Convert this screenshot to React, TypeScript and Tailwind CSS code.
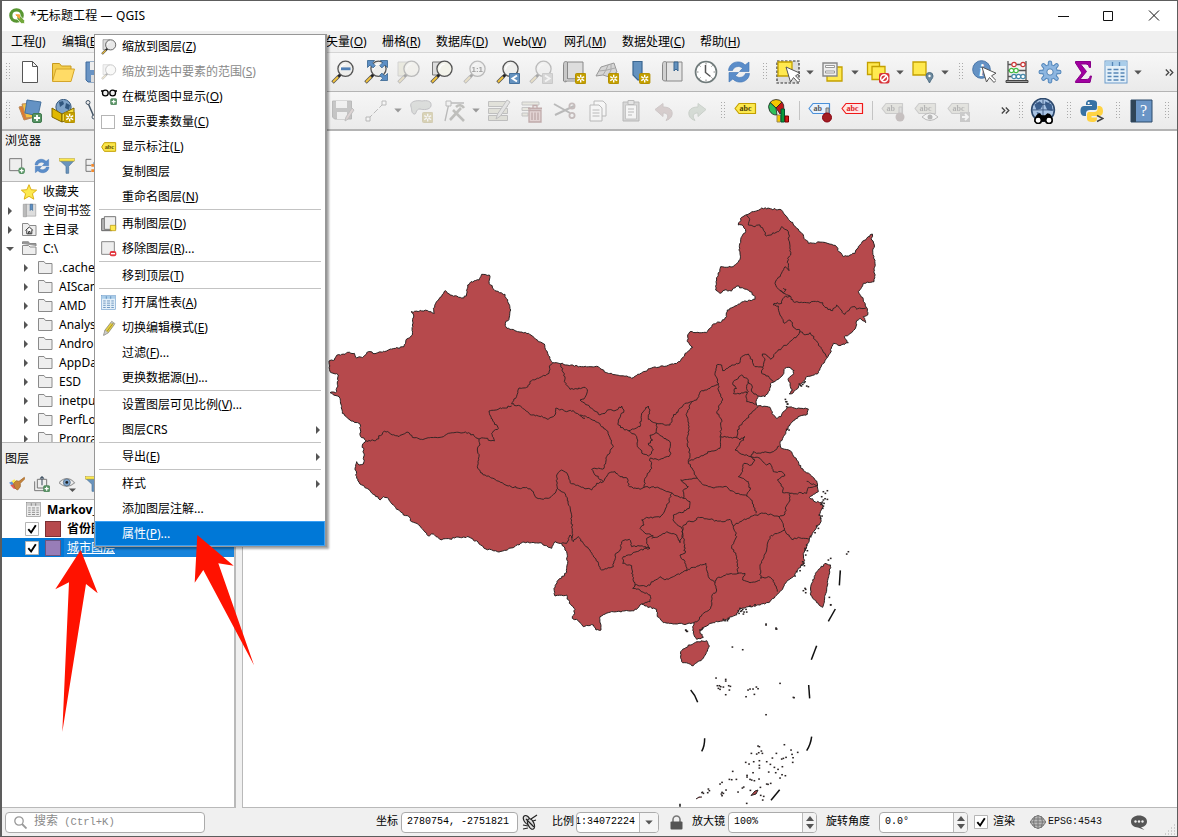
import React from "react";

type Pt = [number, number];

/* ---------- map geometry ---------- */

// Survey tiles: coordinates are stored in thirds of a pixel from the tile's corner.
const WEST: Pt = [325, 260];
const NORTH: Pt = [600, 200];
const EAST: Pt = [540, 400];
const SEA: Pt = [660, 600];

function tile(origin: Pt, data: string): Pt[] {
  return data.trim().split(/\s+/).map((pair) => {
    const [x, y] = pair.split(",").map(Number);
    return [origin[0] + x / 3, origin[1] + y / 3] as Pt;
  });
}

function noise(x: number, y: number) {
  const s = Math.sin(x * 12.9898 + y * 78.233) * 43758.5453;
  return s - Math.floor(s) - 0.5;
}

// Breaks straight runs into short uneven steps, as a detailed border has.
function rough(points: Pt[], amount = 1.5): string {
  const out: Pt[] = [points[0]];
  for (let i = 1; i < points.length; i++) {
    const [ax, ay] = points[i - 1];
    const [bx, by] = points[i];
    const n = Math.max(1, Math.round(Math.hypot(bx - ax, by - ay) / 1.8));
    for (let k = 1; k < n; k++) {
      const x = ax + ((bx - ax) * k) / n;
      const y = ay + ((by - ay) * k) / n;
      out.push([x + noise(x, y) * amount, y + noise(y, x) * amount]);
    }
    out.push([bx, by]);
  }
  return "M" + out.map(([x, y]) => x.toFixed(2) + " " + y.toFixed(2)).join("L");
}

const mainland: Pt[] = [
  ...tile(WEST, `12,303 28,300 35,286 60,283 68,277 88,280 92,292 112,293 130,275 150,281 190,270 237,260 245,237 262,225
    262,195 266,165 258,155 308,152 328,160 325,145 345,112 361,92 375,105 395,108 410,114 424,108 428,75 438,65 462,60
    470,43 493,45 492,65 510,92 540,103 548,125 557,150 552,178 541,190 546,205 570,212 610,220 640,245 658,252 668,280
    683,308 706,311 770,320 820,320`),
  ...tile(NORTH, `0,505 20,518 50,525 80,528 95,535 130,515 160,502 200,498 240,485 260,458 278,442 262,425 263,405 270,395
    320,398 340,372 365,365 380,350 382,330 405,318 430,305 465,298 465,290 450,275 430,265 410,258 400,265 395,273
    375,270 360,280 347,270 350,240 362,200 400,200 420,178 418,140 425,110 437,95 430,78 415,75 425,52 440,44 460,35
    485,24 515,27 540,28 555,45 590,85 605,100 625,130 650,128 672,127 710,140 717,155 730,170 765,160 775,140 800,115
    817,102 815,120 823,135 818,150 825,190 822,245 790,250 785,262 775,275 790,298 800,323 803,345 790,350 797,368
    780,355 770,362 768,380 755,398 733,410 745,428 720,437 700,430 690,460 680,475 665,495 652,522 620,530 605,550
    580,578 568,582 578,570 570,555 565,535 578,525 582,512 570,503 555,505 548,525 530,540 515,548 505,575 495,590
    475,588 468,605 472,618 510,622 520,645 530,655 543,650 550,635 562,622 600,625 625,627 622,643 600,648 575,668
    560,690 548,715`),
  ...tile(EAST, `720,130 722,143 750,152 770,180 790,212 815,228 830,243 832,260 835,275 820,283 808,292 825,305 845,308
    850,320 840,340 843,365 825,390 808,418 800,440 790,460 793,490 775,505 760,530 740,545 720,575 705,590 690,605
    660,615 630,620 600,628 590,645 560,658 520,668 495,680 480,695 490,712 470,718 460,700 458,680 462,668 440,672
    400,672 370,668 352,650 350,628 315,618 305,612 290,628 270,633 230,635 205,638 180,650 182,672 183,690 168,690
    160,675 130,680 115,662 97,655 105,628 88,610 80,585 45,588 42,565 55,540 80,518 83,490 80,455 65,430 45,425
    35,445 0,428`),
  [524, 542], [511, 548], [499, 552], [486, 549], [478, 542], [469, 537], [458, 537], [450, 539],
  ...tile(WEST, `345,838 325,822 310,828 285,798 260,785 250,768 235,765 205,735 190,715 175,710 165,720 150,705 125,685
    105,672 95,655 90,625 95,605 102,615 115,612 118,585 112,555 122,542 107,530 105,492 75,480 52,460 50,440 42,410
    15,398 35,395 40,345 15,335 12,303`),
];

const taiwan = tile(EAST, "855,490 872,495 866,530 860,570 848,622 830,608 812,585 815,550 830,515 855,490");
const hainan = tile(EAST, "475,725 500,722 508,738 490,775 460,797 425,785 422,755 445,735 475,725");

const borders: Pt[][] = [
  tile(WEST, "122,542 152,542 178,513 222,530 246,516 262,532 290,538 330,532 355,530 370,520 430,518 462,537 475,534 508,543 500,520 520,505 498,475 492,453 560,438"),
  tile(WEST, "683,310 673,318 672,340 650,350 620,362 605,382 582,384 572,415 560,432 580,436 598,448 620,465 650,468 670,478 690,465 692,445 725,455 745,452 780,475"),
  tile(EAST, "120,45 130,48 165,62 200,92 220,140 200,170 192,205 165,205 155,208 165,225 185,240 190,245"),
  tile(WEST, "706,311 720,350 718,365 735,388 780,382 787,395 780,412 765,420 800,445 825,465 840,460"),
  tile(EAST, "195,40 202,30 225,32 245,18 252,30 235,60 235,75 255,90 265,92"),
  tile(WEST, "462,537 465,555 457,570 462,590 457,620 475,645 510,658 550,678 590,685 605,682 625,695 632,712 655,718 670,715 690,700 698,685"),
  tile(EAST, "52,265 50,225 65,210 80,218 90,248 125,262 155,270 170,250 190,245 205,220 225,215 240,230 262,235 268,260 300,268 312,262"),
  tile(EAST, "52,265 75,280 90,320 95,360 98,415"),
  tile(EAST, "65,430 80,430 90,405 100,425 115,410 130,430 150,450 185,510 220,500 225,465 240,450 245,425 268,418 275,440 300,438 330,445"),
  tile(EAST, "312,262 350,262 380,275 430,295"),
  tile(EAST, "395,280 385,310 375,330 360,352 320,352 305,360 312,375 300,385 315,400 340,408 320,415 320,430 330,445 300,450 270,465 250,470 248,490 275,497 278,530 285,555"),
  tile(EAST, "430,295 450,305 448,325 425,338 400,345 402,365 425,385 428,400 420,428 410,405 380,395 350,412 335,415"),
  tile(EAST, "285,555 320,560 340,545 360,530 375,540 400,530 440,512 435,485 420,465 435,460 432,430 428,400 428,380"),
  tile(EAST, "285,555 278,565 300,570 330,585 330,605 305,612"),
  tile(EAST, "440,512 460,502 498,490 505,530 525,548 530,570 515,590 512,625 490,640 475,662 462,668"),
  tile(EAST, "525,548 530,535 560,522 595,520 590,470 575,440 590,410 580,378"),
  tile(EAST, "428,380 440,368 465,362 475,352 510,358 545,365 570,358 580,378 600,365 648,345 670,340 718,350"),
  tile(EAST, "430,295 430,270 445,260 422,240 472,235"),
  tile(EAST, "472,235 490,255 515,262 560,260 570,272 620,288"),
  tile(EAST, "455,5 440,40 447,80 442,130 450,160 445,185 472,235"),
  tile(EAST, "445,185 480,170 510,155 540,145 542,110"),
  tile(NORTH, "360,712 365,660 350,635 368,600 355,570 355,550 345,520 350,495 365,495 368,512 395,495 420,488 425,470 445,462 465,500 488,502"),
  tile(NORTH, "355,550 330,565 305,572 290,600 275,605"),
  tile(NORTH, "520,545 505,528 485,520 488,502 495,480 487,462 500,465 512,478 525,460 570,425 595,405 600,390"),
  tile(NORTH, "600,390 585,385 570,360 555,370 540,345 535,318 520,315 522,310 545,310 552,292 570,288"),
  tile(NORTH, "600,395 615,405 630,398 655,430 675,460 680,472"),
  tile(NORTH, "570,288 580,305 620,308 650,305 668,308 675,322 698,332 710,315 735,343 750,325 765,320 770,328 800,323"),
  tile(NORTH, "570,288 552,280 530,262 525,250 555,200 567,212 563,175 572,165 565,95 545,80 535,95 500,108 480,75 465,80 445,75 448,55 440,44"),
  tile(NORTH, "540,272 550,278 558,268 550,264"),
  tile(NORTH, "400,545 425,525 445,540 440,560 445,575 420,582 400,580 402,570 410,565 398,550 400,545"),
  tile(NORTH, "445,545 455,555 455,575 468,582 475,588"),
  tile(NORTH, "440,575 440,605 468,612"),
  tile(NORTH, "475,620 440,655 412,690 410,712"),
  tile(EAST, "542,110 595,115 600,120 615,110 585,150 600,160 632,170 640,155 660,160 700,155 718,138"),
  tile(EAST, "632,170 645,180 635,195 612,190 608,215 595,230 625,245 630,270 620,288 635,300 648,340"),
  tile(EAST, "632,170 660,175 680,195 690,190 700,215 725,215 735,225 712,240 730,265 728,278 750,280 800,280 805,262 830,258"),
  tile(EAST, "800,244 832,258"),
  tile(EAST, "750,280 750,300 738,320 735,340 718,350 730,375 733,390 755,418 775,412 808,418"),
  tile(EAST, "733,390 690,410 680,450 660,500 662,535 685,530 700,540 712,575"),
  tile(EAST, "595,520 615,520 608,540 630,548 660,540"),
  tile(EAST, "265,92 300,80 305,40 325,18 330,30 325,58 350,70 390,75 400,50 430,15 455,5"),
  tile(EAST, "265,92 290,110 292,140 310,162 325,168 340,150 325,130 338,120 330,105 348,98 350,70"),
  tile(EAST, "348,98 390,125 390,165 355,180 330,175 335,205 315,235 312,262"),
];

const islets: Pt[] = [
  ...tile(SEA, `168,234 197,238 197,243 172,257 178,257 182,260 190,261 175,265 180,268 206,257 211,259 208,270 197,284
    264,270 270,267 279,267 289,261 294,266 283,283 258,290 360,250 400,292 402,293 318,344 373,434 294,438 298,440
    274,460 290,462 296,458 304,453 307,460 349,460 393,450 396,463 413,457 399,473 398,487 337,474 365,477 370,475
    378,472 320,485 331,493 343,502 354,508 367,500 326,516 347,518 376,527 366,524 360,534 257,487 267,492 281,485
    298,482 298,496 298,504 279,518 261,526 261,531 270,538 275,540 283,542 297,537 218,514 208,538 215,539 229,538
    186,547 180,552 198,570 186,577 184,582 190,580 186,587 145,567 148,572 143,578 127,577 130,580 247,564 251,561
    234,576 271,571 301,562 302,586 311,589 308,600 260,610 332,550 320,552 324,553 318,72 318,75 348,84 350,87 348,87
    217,141 248,149 78,91 82,94 512,14`),
  ...tile(EAST, `865,480 872,475 868,592 872,615 795,565 797,568 797,578 790,572 920,462 925,455 850,275 856,280 845,290
    862,272 850,300 855,296 862,298 845,312 850,318 852,310 847,306 843,313 848,325 838,345 846,348 842,355 835,385
    825,398 830,378 812,410 800,435 795,450 797,465 795,445 802,452 790,490 785,495 793,497 788,485 780,512 770,515
    765,528 738,5 742,12 740,20 600,625 605,632 612,636 618,628 597,640 610,642 602,634 608,628 595,632 620,636
    565,655 555,662 562,662 550,658 485,688 480,690 488,684 437,690 440,694 630,618 645,614`),
  ...tile(NORTH, "598,552 602,556 608,553 612,548 615,545 620,558 625,560 604,558 560,605 563,612 556,598 560,688 567,690"),
];

const dashes = [
  "M901 511L898 556", "M886 627L865 664", "M830 737L814 779",
].map((d) => ({ d, o: EAST })).concat([
  { d: "M446 255L449 295", o: SEA },
  { d: "M455 410C453 425 446 443 440 452", o: SEA },
  { d: "M359 569L333 601", o: SEA },
  { d: "M92 270Q106 285 113 307", o: SEA },
  { d: "M134 415Q134 440 125 454", o: SEA },
  { d: "M60 611L60 620", o: SEA },
]);

function MapCanvas() {
  return (
    <svg className="block h-full w-full" viewBox="243 131 934 676" preserveAspectRatio="xMinYMin slice">
      <g fill="#b6494c" stroke="#2a2323" strokeWidth="1" strokeLinejoin="round">
        <path d={rough(mainland)} />
        <path d={rough(taiwan)} />
        <path d={rough(hainan)} />
        <path d="M751 795.5L755 791L758 790L756 794Z M696 799l3-2 3 0 M701 793l2-1" />
        <g fill="none" strokeWidth="0.9">
          {borders.map((b, i) => <path key={i} d={rough(b, 1.7)} />)}
        </g>
      </g>
      {islets.map(([x, y], i) => (
        <rect key={i} x={x - 0.8} y={y - 0.7} width={1.7} height={1.5} fill="#2a2323" />
      ))}
      {dashes.map(({ d, o }, i) => (
        <path key={i} d={d} transform={`translate(${o[0]} ${o[1]}) scale(.33333)`} fill="none" stroke="#111" strokeWidth="4.500" />
      ))}
    </svg>
  );
}

/* ---------- icons ---------- */

function Svg({ children, size = 24, dim = false }: { children: React.ReactNode; size?: number; dim?: boolean }) {
  return (
    <svg width={size} height={size} viewBox="0 0 24 24" className={dim ? "shrink-0 opacity-35 saturate-50" : "shrink-0"}>
      {children}
    </svg>
  );
}

const Lens = ({ fill = "#eeeeec" }: { fill?: string }) => (
  <>
    <path d="M9.500 14.500L7 17" stroke="#222" strokeWidth="3" />
    <path d="M7.500 16.500L1.500 22.500" stroke="#555" strokeWidth="3.400" />
    <path d="M7 17L2 22" stroke="#f3c43c" strokeWidth="1.800" />
    <circle cx="14.500" cy="8.800" r="7.600" fill={fill} stroke="#555" strokeWidth="1.300" />
    <path d="M9.600 9.400a5 5 0 0 1 5-5.200" fill="none" stroke="#fff" strokeWidth="1.200" />
  </>
);

const Spark = ({ x = 13, y = 13 }: { x?: number; y?: number }) => (
  <g transform={`translate(${x} ${y})`}>
    <rect x=".5" y=".5" width="10.4" height="10" rx="1" fill="#c4a000" stroke="#b38f00" />
    <path d="M5.700 1.800v7.600M2.200 3.600l7 4M9.200 3.600l-7 4" stroke="#fff" strokeWidth="1.400" />
    <circle cx="5.700" cy="5.600" r="1.100" fill="#c4a000" />
  </g>
);

const Plus = ({ x = 14, y = 14 }: { x?: number; y?: number }) => (
  <g transform={`translate(${x} ${y})`}>
    <rect x=".5" y=".5" width="9" height="9" rx="1.500" fill="#589465" stroke="#3f7a4d" />
    <path d="M5 2v6M2 5h6" stroke="#fff" strokeWidth="1.800" />
  </g>
);

const Cursor = () => <path d="M10 7l4.500 15 3-4.500 4.500 5 2-2-4.500-4.700 4.500-2.600z" fill="#fff" stroke="#555" strokeWidth="1" />;

const Refresh = () => (
  <g fill="#5b8dc9" stroke="#3d72b4" strokeWidth=".6">
    <path d="M1.500 10.500C2 4 8 .800 13.500 2.200c2 .5 3.500 1.500 4.600 2.800l3.900-3v9.500h-9.500l3-3.200C12.500 5.200 7 6.300 5.500 10.500z" />
    <path d="M22.500 13.500C22 20 16 23.200 10.500 21.800c-2-.5-3.500-1.500-4.600-2.800L2 22v-9.500h9.500l-3 3.200c3 3.100 8.500 2 10-2.200z" />
  </g>
);

const Tag = ({ bg, line, ink, text = "abc" }: { bg: string; line: string; ink: string; text?: string }) => (
  <>
    <path d="M1 9.500L5 4.500H21.500V14.500H5Z" fill={bg} stroke={line} strokeWidth="1.200" strokeLinejoin="round" />
    <text x="5.500" y="11.800" fontSize="8" fontWeight="bold" fill={ink} fontFamily="Liberation Serif, serif">{text}</text>
  </>
);

const Folder = ({ home = false, open = false }: { home?: boolean; open?: boolean }) => (
  <svg width="15" height="15" viewBox="0 0 15 15" className="shrink-0">
    {open && <path d="M.5 3V.8h6l1 1.700h6.500V5" fill="#999" stroke="#888" />}
    <path d={open ? "M.5 13.500v-9h6l1.500 1.500h6v7.500z" : "M.5 13.500V1.500h5.500l1.500 2h6.500v10z"} fill="#eee" stroke="#8a8a8a" />
    {home && <path d="M3.500 8.500l3.800-3.500 3.800 3.500M4.800 8.200v3.600h5V8.200M6.600 11.800V9.600h1.500v2.200" fill="#fff" stroke="#333" />}
  </svg>
);

const Table = ({ gray = false }: { gray?: boolean }) => (
  <>
    <rect x="1" y="1" width="22" height="22" fill={gray ? "#eee" : "#e4f0f9"} stroke={gray ? "#888" : "#6c9bca"} />
    <rect x="1.500" y="1.500" width="21" height="4.500" fill={gray ? "#ccc" : "#a9cdea"} />
    <path d="M3.500 9.500h4M9.500 9.500h5M16.500 9.500h4M3.500 13h4M9.500 13h5M16.500 13h4M3.500 16.500h4M9.500 16.500h5M16.500 16.500h4M3.500 20h4M9.500 20h5M16.500 20h4M8.500 2v4M15.500 2v4" stroke={gray ? "#777" : "#5585b5"} strokeWidth="1.300" />
  </>
);

const Funnel = () => (
  <>
    <path d="M1.500 4h21l-8 8.500V23h-4V12.500z" fill="#6a94bd" stroke="#466f98" />
    <rect x="1" y="1" width="22" height="3.600" fill="#fce94f" stroke="#b8a22a" strokeWidth=".8" />
  </>
);

const Bin = () => (
  <>
    <path d="M2 3h17v3H2zM2 8.500h8v3H2zM2 14h6v3H2z" fill="#d8d4a8" stroke="#777" />
    <path d="M8 9.500h14" stroke="#922" strokeWidth="2" />
    <path d="M13 9V6.500h4V9" fill="none" stroke="#922" strokeWidth="1.300" />
    <path d="M9 11.500h12V23H9z" fill="#e99" stroke="#922" strokeWidth="1.300" />
    <path d="M12 13.500V21M15 13.500V21M18 13.500V21" stroke="#922" strokeWidth="1.400" />
  </>
);

const Pencil = () => (
  <>
    <path d="M4 23l2-8L16 2l5 3.500L11 19z" fill="#e5cf45" stroke="#777" strokeWidth="1" />
    <path d="M16 2l5 3.500-1.500 2.500-5.200-3.500z" fill="#bbb" />
    <path d="M9 17L18.500 4.500" stroke="#a8952a" strokeWidth="1.500" />
    <path d="M4 23l2-8 5 4z" fill="#ccc" stroke="#888" strokeWidth=".6" />
  </>
);

function Arrow({ faded = false }: { faded?: boolean }) {
  return (
    <span className="flex w-3 justify-center">
      <svg width="8" height="5" viewBox="0 0 8 5"><path d="M.3.500h7.400L4 4.600z" fill={faded ? "#999" : "#555"} /></svg>
    </span>
  );
}

const GripDots = () => (
  <svg width="4" height="18" viewBox="0 0 4 18" className="shrink-0">
    {[0, 3, 6, 9, 12, 15].map((y) => (
      <path key={y} d={`M0 ${y + 0.5}h1M3 ${y + 0.5}h1`} stroke="#aaa" />
    ))}
  </svg>
);

const Grip = () => <span className="flex w-4 justify-end pr-1"><GripDots /></span>;

const Slot = ({ children }: { children: React.ReactNode }) => (
  <span className="flex w-[33px] shrink-0 items-center justify-center">{children}</span>
);

const Divider = ({ className }: { className: string }) => (
  <span className={`flex justify-center ${className}`}><i className="h-[19px] w-px bg-[#c4c4c4]" /></span>
);

const More = () => (
  <svg width="9" height="7" viewBox="0 0 9 7"><path d="M.8.500l3 3-3 3M4.800.500l3 3-3 3" fill="none" stroke="#444" strokeWidth="1.300" /></svg>
);

function Toolbar1() {
  return (
    <div className="flex h-[39px] items-center border-b border-[#b4b4b4] bg-gradient-to-b from-[#f7f7f7] to-[#eaeaea]">
      <span className="flex w-[11px] pl-1"><GripDots /></span>
      <Slot><Svg><path d="M4.500 1.500h10l5 5v16h-15zM14.500 1.500v5h5" fill="#fff" stroke="#555" /></Svg></Slot>
      <Slot><Svg><path d="M1.500 21V3.500h7l2 2.500H20v4" fill="#f3cd4b" stroke="#c79a1e" /><path d="M1.500 21.500L5 9h18.500L20 21.500z" fill="#ffdb66" stroke="#d4a52a" /></Svg></Slot>
      <Slot><Svg><path d="M2 2h20v20H4l-2-2z" fill="#6a94c4" stroke="#3e6b9d" /><path d="M6 2h12v8H6z" fill="#eee" /><path d="M7 15h10v7H7z" fill="#ddd" /></Svg></Slot>
      <span className="w-[214px]" />
      <Slot><Svg><Lens /><path d="M10 8.800h9.500" stroke="#4f7fb5" strokeWidth="2.800" /></Svg></Slot>
      <Slot><Svg><Lens /><g fill="#5d8fc5" stroke="#37648f" strokeWidth=".8"><path d="M3.500.500h7L8.300 2.700l3 3-2.200 2.200-3-3-2.600 2.600z" /><path d="M23.500.500h-7l2.200 2.200-3 3 2.200 2.200 3-3 2.600 2.600z" /><path d="M23.500 20.500h-7l2.200-2.200-3-3 2.200-2.200 3 3 2.600-2.600z" /></g></Svg></Slot>
      <Slot><Svg dim><path d="M1 2h10v14H1z" fill="#ddd8a0" stroke="#999" /><Lens fill="#f3f0d8" /></Svg></Slot>
      <Slot><Svg><path d="M2.500 2h9v13h-9z" fill="#ddd" stroke="#777" /><Lens fill="#f3f3ea" /></Svg></Slot>
      <Slot><Svg dim><Lens /><text x="8.500" y="12" fontSize="8" fontWeight="bold" fontFamily="Liberation Sans, sans-serif">1:1</text></Svg></Slot>
      <Slot><Svg><Lens /><path d="M13.500 13.500h10v10h-10z" fill="#6492bf" stroke="#46729e" /><path d="M21 15.500l-4.500 3 4.500 3" fill="none" stroke="#fff" strokeWidth="2" /></Svg></Slot>
      <Slot><Svg dim><Lens /><path d="M13.500 13.500h10v10h-10z" fill="#aaa" stroke="#888" /><path d="M16 15.500l4.500 3-4.500 3" fill="none" stroke="#fff" strokeWidth="2" /></Svg></Slot>
      <Slot><Svg><path d="M5.500 2H21v17H5.500z" fill="#ddd" stroke="#888" /><path d="M5.500 2C2 .500 1.500 3 1.500 5v16c2 2 4 0 4-2z" fill="#c8c8c8" stroke="#888" /><path d="M3 21h15v-2H5.500" fill="#eee" stroke="#888" /><Spark /></Svg></Slot>
      <Slot><Svg><path d="M1 16l5-9 13-4 3 9-8 5-6-2z" fill="#d5d5d5" stroke="#999" /><path d="M4 11l8-1 8-2M8 15l3-5 2-5M13 16l3-6 0-6" fill="none" stroke="#aaa" /><Spark /></Svg></Slot>
      <Slot><Svg><path d="M5 1.500h9V19l-4 1-5-5z" fill="#6492bf" stroke="#3b6791" strokeWidth="1.200" /><Spark x={11} /></Svg></Slot>
      <Slot><Svg><path d="M5.500 2H21v19H5.500z" fill="#e4e4e4" stroke="#888" /><path d="M5.500 2C2 .500 1.500 3 1.500 5v14c0 2 2 2 4 2z" fill="#d0d0d0" stroke="#888" /><path d="M13 2h4v9l-2-2-2 2z" fill="#6492bf" stroke="#37648f" /></Svg></Slot>
      <Slot><Svg><circle cx="12" cy="12" r="10.500" fill="#fff" stroke="#6f7a7a" strokeWidth="1.600" /><path d="M12 2.500v2M12 19.500v2M2.500 12h2M19.500 12h2M5.300 5.300l1.300 1.300M17.400 17.400l1.300 1.300M18.700 5.300l-1.300 1.300M6.600 17.400l-1.300 1.300" stroke="#888" /><path d="M11.500 5v7.500l5 4" fill="none" stroke="#555" strokeWidth="1.500" /></Svg></Slot>
      <Slot><Svg><Refresh /></Svg></Slot>
      <Grip />
      <Slot><Svg><path d="M1 1h22v22H1z" fill="#ddd" stroke="#333" strokeDasharray="2.500 1.500" strokeWidth="1.200" /><path d="M2 2h14v14H2z" fill="#ffe94f" stroke="#c4a000" strokeWidth="1.300" /><Cursor /></Svg></Slot>
      <Arrow />
      <Slot><Svg><path d="M6 7h15v14H6z" fill="#ffe94f" stroke="#c4a000" strokeWidth="1.300" /><path d="M2 3h14v13H2z" fill="#eee" stroke="#888" strokeWidth="1.400" /><path d="M4.500 5.500h9v2h-9zM4.500 11h9v2h-9z" fill="#fff" stroke="#999" /></Svg></Slot>
      <Arrow />
      <Slot><Svg><path d="M1.500 2.500h12v12h-12z" fill="#ffe94f" stroke="#c4a000" strokeWidth="1.300" /><path d="M6 6.500h13v13H6z" fill="#ffe94f" stroke="#c4a000" strokeWidth="1.300" /><rect x="13" y="13" width="10.500" height="10.500" rx="2" fill="#d8343a" /><circle cx="18.200" cy="18.200" r="3.500" fill="none" stroke="#fff" strokeWidth="1.500" /><path d="M15.800 20.600l5-5" stroke="#fff" strokeWidth="1.500" /></Svg></Slot>
      <Arrow />
      <Slot><Svg><path d="M2 2h13v13H2z" fill="#ffe94f" stroke="#c4a000" strokeWidth="1.300" /><path d="M18.500 23c-1-3-3.500-4.500-3.500-7a3.500 3.500 0 0 1 7 0c0 2.500-2.500 4-3.500 7z" fill="#6d8a9f" stroke="#4e6d83" /><circle cx="18.500" cy="16" r="1.200" fill="#fff" /></Svg></Slot>
      <Arrow />
      <Grip />
      <Slot><Svg><circle cx="9.500" cy="9.500" r="8.800" fill="#6492c4" stroke="#4875a8" /><text x="7" y="15.500" fontSize="17" fontStyle="italic" fontWeight="bold" fill="#fff" fontFamily="Liberation Serif, serif">i</text><Cursor /></Svg></Slot>
      <Slot><Svg><path d="M3 1v21M21 1v21M3 4.500h18M3 10.500h18M3 16.500h18" fill="none" stroke="#555" strokeWidth="1.300" /><path d="M1 20.500h22v2H1z" fill="#999" stroke="#444" /><g fill="#fff" strokeWidth="1.200"><g stroke="#c33"><circle cx="9" cy="4.500" r="2.200" /><circle cx="18" cy="4.500" r="2.200" /></g><g stroke="#4b4"><circle cx="6.500" cy="10.500" r="2.200" /><circle cx="11" cy="10.500" r="2.200" /></g><g stroke="#48a"><circle cx="9" cy="16.500" r="2.200" /><circle cx="13.500" cy="16.500" r="2.200" /><circle cx="18" cy="16.500" r="2.200" /></g></g></Svg></Slot>
      <Slot><Svg><g stroke="#4f83b8" strokeWidth="4.400" strokeLinecap="round">{[0, 45, 90, 135].map((a) => <path key={a} d="M12 2.700v18.600" transform={`rotate(${a} 12 12)`} />)}</g><circle cx="12" cy="12" r="7.300" fill="#8db6e0" stroke="#4f83b8" /><g stroke="#8db6e0" strokeWidth="2.600" strokeLinecap="round">{[0, 45, 90, 135].map((a) => <path key={a} d="M12 2.700v18.600" transform={`rotate(${a} 12 12)`} />)}</g><circle cx="12" cy="12" r="3.200" fill="#f3f3f3" stroke="#4f83b8" /></Svg></Slot>
      <Slot><Svg><path d="M4.500 1.500h15v6h-1.200c-.5-2.500-1.500-3.500-4-3.500H9.500l6 7.500-6.500 8h6c2.500 0 3.500-1 4.200-3.500h1.300L19 22.500H4.500v-1.200L11 13 4.500 3z" fill="#a000a0" stroke="#880088" /></Svg></Slot>
      <Slot><Svg><Table /></Svg></Slot>
      <Arrow />
      <span className="flex w-[30px] justify-end"><More /></span>
    </div>
  );
}

function Toolbar2() {
  return (
    <div className="flex h-[39px] items-center border-b-2 border-[#b4b4b4] bg-gradient-to-b from-[#f6f6f6] to-[#ebebeb]">
      <span className="flex w-[11px] pl-1"><GripDots /></span>
      <Slot><Svg><path d="M1 8l12-3 4 13-11 3z" fill="#e07a2e" stroke="#b85" /><path d="M4 5l12-1 1 14-9 1z" fill="#f6c243" stroke="#b85" /><path d="M9 1l14 2-3 14-13-3z" fill="#6492c4" stroke="#46729e" /><Plus /></Svg></Slot>
      <Slot><Svg><circle cx="12.500" cy="8" r="7.600" fill="#7fa3c8" stroke="#34597f" /><path d="M8 3l4-1 1 3-4 3zM15 4l4 2-1 5-4-2z" fill="#31577f" /><path d="M1 9l10 6v8L1 18z" fill="#e0b800" stroke="#7d6500" /><path d="M11 15l12-6v9l-12 5z" fill="#f5dc3a" stroke="#7d6500" /><Spark /></Svg></Slot>
      <Slot><Svg><path d="M4 4l6 14L22 5" fill="none" stroke="#456" strokeWidth="1.500" /><circle cx="4" cy="3.500" r="2" fill="#eee" stroke="#456" /><circle cx="10" cy="18" r="2" fill="#eee" stroke="#456" /></Svg></Slot>
      <span className="w-[214px]" />
      <Slot><Svg dim><path d="M1.500 2h19v18h-17l-2-2z" fill="#777" stroke="#555" /><path d="M5 2h11v7H5zM6 13h10v7H6z" fill="#eee" /><path d="M14 22l1-4 6-9 2 2-6 9z" fill="#c99" stroke="#666" /></Svg></Slot>
      <Slot><Svg dim><path d="M4 20L20 4" stroke="#555" strokeDasharray="6 2" /><path d="M2 18h4v4H2zM18 2h4v4h-4z" fill="#fff" stroke="#555" /></Svg></Slot>
      <Arrow faded />
      <Slot><Svg dim><path d="M2 8c-2-6 6-7 11-6 5-1 10 0 9 5-1 4-8 4-11 3-5 0-3 6-6 5S3 10 2 8z" fill="#aeb8ae" stroke="#667" /><Spark /></Svg></Slot>
      <Slot><Svg dim><path d="M3 22L7 4h15" fill="none" stroke="#555" strokeWidth="1.300" /><path d="M4 2h5v5H4z" fill="#eee" stroke="#555" /><path d="M8 21l11-12M11 11l11 11" stroke="#665" strokeWidth="2.600" /><path d="M14 8c3-3 6-2 8 1" fill="none" stroke="#665" strokeWidth="2.600" /></Svg></Slot>
      <Arrow faded />
      <Slot><Svg dim><path d="M1.500 2.500h19v5h-19zM1.500 9.500h19v5h-19zM1.500 16.500h19v5h-19z" fill="#c5c59a" stroke="#666" /><path d="M9 20l1.500-5L20 1l3 2-9.500 14z" fill="#ccc" stroke="#666" /></Svg></Slot>
      <Slot><Svg dim><Bin /></Svg></Slot>
      <Slot><Svg dim><path d="M1 5l16 9M2 16l19-9" stroke="#555" strokeWidth="2" /><circle cx="19" cy="7" r="2.600" fill="none" stroke="#855" strokeWidth="1.800" /><circle cx="19" cy="16.500" r="2.600" fill="none" stroke="#855" strokeWidth="1.800" /></Svg></Slot>
      <Slot><Svg dim><path d="M8 2h9l3 3v12H8z" fill="#fff" stroke="#555" /><path d="M4 6h9l3 3v13H4z" fill="#fff" stroke="#555" /><path d="M6.500 11h7M6.500 14h7M6.500 17h7" stroke="#555" /></Svg></Slot>
      <Slot><Svg dim><path d="M4 3h16v19H4z" fill="#aaa" stroke="#555" /><path d="M6.500 6h11v14h-11z" fill="#fff" stroke="#777" /><path d="M9 1.500h6v4H9zM9 10h6M9 13h6M9 16h4" fill="#ccc" stroke="#555" /></Svg></Slot>
      <Slot><Svg dim><path d="M3 10.500l8-6v3.500c6 0 10 2.500 9 8-1 3.500-3.500 4.500-6 5.500 3.500-5 1.500-7.500-3-7.500v3.500z" fill="#b88" stroke="#977" /></Svg></Slot>
      <Slot><Svg dim><path d="M21 10.500l-8-6v3.500c-6 0-10 2.500-9 8 1 3.500 3.500 4.500 6 5.500-3.500-5-1.500-7.500 3-7.500v3.500z" fill="#9b9" stroke="#797" /></Svg></Slot>
      <Grip />
      <Slot><Svg><Tag bg="#fce94f" line="#c4a000" ink="#4d4000" /></Svg></Slot>
      <Slot><Svg><path d="M9 9L3 3.500A8 8 0 0 1 15 3z" fill="#f4c800" stroke="#222" strokeWidth=".8" /><path d="M9 9l6-6a8 8 0 0 1-2 12z" fill="#c01818" stroke="#222" strokeWidth=".8" /><path d="M9 9L3 3.500A8 8 0 0 0 10 16z" fill="#2fc05a" stroke="#222" strokeWidth=".8" /><path d="M10 16h3.500v7H10z" fill="#f4c800" stroke="#985" /><path d="M14 10h3.500v13H14z" fill="#0b9a3a" stroke="#053" /><path d="M18 17h3.500v6H18z" fill="#d01818" stroke="#700" /></Svg></Slot>
      <Divider className="w-2" />
      <Slot><Svg><Tag bg="#e8f2fd" line="#4a90d9" ink="#555" text="ab" /><path d="M18 9h3v8h-3z" fill="#bbb" stroke="#777" /><circle cx="19" cy="18.500" r="4.500" fill="#a31e22" stroke="#801" /></Svg></Slot>
      <Slot><Svg><Tag bg="#ffe6e6" line="#f01818" ink="#d22" /></Svg></Slot>
      <Divider className="w-[7px]" />
      <Slot><Svg dim><Tag bg="#c9c9b0" line="#888" ink="#444" text="ab" /><path d="M18 8h3v8h-3z" fill="#bbb" stroke="#777" /><circle cx="19" cy="18" r="4.500" fill="#866" /></Svg></Slot>
      <Slot><Svg dim><Tag bg="#c9c9b0" line="#888" ink="#444" /><path d="M8 18q8-8 16 0q-8 7-16 0z" fill="#fff" stroke="#555" /><circle cx="16" cy="18" r="2.500" fill="#555" /></Svg></Slot>
      <Slot><Svg dim><Tag bg="#c9c9b0" line="#888" ink="#444" /><path d="M13 13h10v10H13z" fill="#888" /><path d="M15 18h5M18 15l3 3-3 3" fill="none" stroke="#fff" strokeWidth="1.800" /></Svg></Slot>
      <span className="flex w-[35px] justify-end"><More /></span>
      <span className="flex w-[16px] justify-end pr-[3px]"><GripDots /></span>
      <Slot><Svg size={26}><circle cx="12" cy="11" r="10.500" fill="#a9c4e4" stroke="#2e4a6e" strokeWidth="1.500" /><path d="M4 6l5-3 3 3-2 4-4 1zM14 3l6 3 1 6-5-1-2-4zM6 13l4 1-1 5z" fill="#3b5f8e" /><path d="M2 11h20M12 1v20M5 4q7 4 14 0" fill="none" stroke="#35517a" strokeWidth=".8" /><path d="M4 22c0-5 3-8 5-8l2 2h3l2-2c3 0 5 3 5 8z" fill="#000" /><circle cx="7.500" cy="20.500" r="3" fill="#fff" stroke="#000" strokeWidth="1.500" /><circle cx="17.500" cy="20.500" r="3" fill="#fff" stroke="#000" strokeWidth="1.500" /></Svg></Slot>
      <Grip />
      <Slot><Svg><path d="M11 1c-5 0-5 2-5 5h6v1H4c-3 0-3.500 3-3.500 5S1.500 17 4 17h2v-3c0-2 2-3 4-3h5c2 0 2-2 2-3V4c0-2-2-3-6-3z" fill="#3772a4" /><circle cx="8.700" cy="4" r="1.100" fill="#fff" /><path d="M12 23c5 0 5-2 5-4.500h-5.500V17H19c3 0 4-2.500 4-5s-1-5-4-5h-1.500v3c0 2-1.500 3-3.500 3H9c-2 0-2 2-2 3v4c0 2 2 3 5 3z" fill="#ffd343" /><path d="M17 16.500l6 3-6 3" fill="none" stroke="#444" strokeWidth="1.500" /></Svg></Slot>
      <Grip />
      <Slot><Svg><path d="M2 1h21v22H2z" fill="#6a95c6" stroke="#2c4a6b" /><path d="M2 1h5v22H2z" fill="#2f4558" /><text x="11" y="17" fontSize="16" fill="#fff" fontFamily="Liberation Serif, serif">?</text></Svg></Slot>
      <span className="flex w-[12px] justify-end"><GripDots /></span>
    </div>
  );
}

/* ---------- menus ---------- */

function Mnemonic({ text, k, tail = "" }: { text: string; k?: string; tail?: string }) {
  return (
    <span className="whitespace-nowrap">
      {text}
      {k && <>(<span className="underline underline-offset-1">{k}</span>)</>}
      {tail}
    </span>
  );
}

const topMenus: [string, string, string][] = [
  ["矢量", "O", "w-[56px]"], ["栅格", "R", "w-[54px]"], ["数据库", "D", "w-[67px]"], ["Web", "W", "w-[61px]"],
  ["网孔", "M", "w-[58px]"], ["数据处理", "C", "w-[78px]"], ["帮助", "H", "w-[60px]"],
];

type Item = { text: string; k?: string; tail?: string; icon?: React.ReactNode; sub?: boolean; off?: boolean; on?: boolean };

const contextItems: (Item | null)[] = [
  { text: "缩放到图层", k: "Z", icon: <Svg size={16}><path d="M3 1h10v15H3z" fill="#ddd" stroke="#888" /><Lens fill="#e8e8e8" /></Svg> },
  { text: "缩放到选中要素的范围", k: "S", off: true, icon: <Svg size={16} dim><path d="M3 1h10v15H3z" fill="#ddd" stroke="#888" /><Lens /></Svg> },
  { text: "在概览图中显示", k: "O", icon: <Svg size={16}><path d="M0 3h4M20 3h4" stroke="#000" strokeWidth="2.500" /><circle cx="6.500" cy="6" r="4.300" fill="#eee" stroke="#000" strokeWidth="2" /><circle cx="17.500" cy="6" r="4.300" fill="#eee" stroke="#000" strokeWidth="2" /><Plus /></Svg> },
  { text: "显示要素数量", k: "C", icon: <i className="size-3.5 border border-[#b5b5b5] bg-white" /> },
  { text: "显示标注", k: "L", icon: <Svg size={16}><path d="M1 12l4-6.500h17v13H5z" fill="#fbe64a" stroke="#c4a000" strokeWidth="1.500" /><text x="5.500" y="15.200" fontSize="9.500" fontWeight="bold" fill="#5d5000" fontFamily="Liberation Serif, serif">abc</text></Svg> },
  { text: "复制图层" },
  { text: "重命名图层", k: "N" },
  null,
  { text: "再制图层", k: "D", icon: <Svg size={16}><path d="M1 4h15v18H1z" fill="#bbb" stroke="#666" strokeWidth="1.500" /><path d="M5 1h17v19H5z" fill="#eee" stroke="#777" strokeWidth="1.500" /><path d="M14 14h8v8h-8z" fill="#ffe94f" stroke="#b38f00" /></Svg> },
  { text: "移除图层", k: "R", tail: "...", icon: <Svg size={16}><path d="M1 1h19v19H1z" fill="#eee" stroke="#888" strokeWidth="1.500" /><rect x="13" y="15" width="10" height="8" rx="3" fill="#e33a42" /><path d="M15 19h6" stroke="#fff" strokeWidth="2" /></Svg> },
  null,
  { text: "移到顶层", k: "T" },
  null,
  { text: "打开属性表", k: "A", icon: <Svg size={15}><Table /></Svg> },
  { text: "切换编辑模式", k: "E", icon: <Svg size={16}><Pencil /></Svg> },
  { text: "过滤", k: "F", tail: "..." },
  { text: "更换数据源", k: "H", tail: "..." },
  null,
  { text: "设置图层可见比例", k: "V", tail: "..." },
  { text: "图层CRS", sub: true },
  null,
  { text: "导出", k: "E", sub: true },
  null,
  { text: "样式", sub: true },
  { text: "添加图层注解..." },
  { text: "属性", k: "P", tail: "...", on: true },
];

function ContextMenu() {
  return (
    <div className="absolute left-[92px] top-[33px] flex h-[513px] w-[233px] flex-col border border-r-2 border-[#979797] bg-white shadow-[2px_2px_2px_rgba(0,0,0,0.35)]">
      {contextItems.map((it, i) =>
        it === null ? (
          <i key={i} className="mx-1 mb-px h-px bg-[#c3c3c3]" />
        ) : (
          <div
            key={i}
            className={
              "flex items-center pl-1.5 pr-[5px] " + (i === 0 ? "h-6 " : "h-[25px] ") +
              (it.on ? "bg-[#0078d7] text-white outline outline-[#3aa0f5] -outline-offset-1" : it.off ? "text-[#8a8a8a]" : "text-black")
            }
          >
            <span className="flex w-[21px] items-center">{it.icon}</span>
            <Mnemonic text={it.text} k={it.k} tail={it.tail} />
            {it.sub && <svg className="ml-auto" width="4" height="8" viewBox="0 0 4 8"><path d="M0 0l4 4-4 4z" fill="#555" /></svg>}
          </div>
        ),
      )}
    </div>
  );
}

/* ---------- docks ---------- */

const Caret = ({ open = false }: { open?: boolean }) => (
  <svg width="8" height="8" viewBox="0 0 8 8" className="shrink-0">
    <path d={open ? "M0 2h8L4 6z" : "M2 0l4 4-4 4z"} fill="#555" />
  </svg>
);

const folders = [".cache", "AIScanner", "AMD", "Analysis", "Android", "AppData", "ESD", "inetpub", "PerfLogs", "Program Files"];

function Browser() {
  return (
    <section className="flex h-[312px] flex-col">
      <h2 className="h-5 pl-[3px] leading-5">浏览器</h2>
      <div className="flex h-[30px] items-center gap-[9px] pb-px pl-[7px]">
        <Svg size={16}><path d="M1 1h18v18H1z" fill="#eee" stroke="#777" strokeWidth="1.500" /><circle cx="19" cy="19" r="5" fill="#589465" /><path d="M19 16v6M16 19h6" stroke="#fff" strokeWidth="1.800" /></Svg>
        <Svg size={16}><Refresh /></Svg>
        <Svg size={16}><Funnel /></Svg>
        <Svg size={16}><path d="M3 2h8M3 2v18h8M3 11h8" fill="none" stroke="#777" strokeWidth="1.500" /><path d="M11 9h4v4h-4zM11 17h4v4h-4z" fill="#f58a2c" /><path d="M14 8l6-7v22" fill="#69c" stroke="#369" /></Svg>
      </div>
      <div className="min-h-0 flex-1 overflow-hidden border border-l-0 border-[#b9b9b9] bg-white">
        <div className="flex h-[19px] items-center pl-[19px]"><Svg size={16}><path d="M12 1l3.200 7.500 8.300.700-6.300 5.400 2 8.200L12 18.500l-7.200 4.300 2-8.200L.500 9.200l8.300-.7z" fill="#fce94f" stroke="#d9a700" strokeWidth="1.300" /></Svg><span className="ml-[6px]">收藏夹</span></div>
        <div className="flex h-[19px] items-center pl-1"><Caret /><span className="ml-2 flex"><Svg size={15}><path d="M6 2h16v19H6z" fill="#ddd" stroke="#999" /><path d="M2 2h5v20H2z" fill="#bbb" stroke="#999" /><path d="M13 2h4v10l-2-2-2 2z" fill="#5d8fc5" stroke="#37648f" /></Svg></span><span className="ml-1.5 whitespace-nowrap">空间书签</span></div>
        <div className="flex h-[19px] items-center pl-1"><Caret /><span className="ml-2"><Folder home /></span><span className="ml-1.5">主目录</span></div>
        <div className="flex h-[19px] items-center pl-1"><Caret open /><span className="ml-2"><Folder open /></span><span className="ml-1.5">C:\</span></div>
        {folders.map((f) => (
          <div key={f} className="flex h-[19px] items-center whitespace-nowrap pl-5"><Caret /><span className="ml-2"><Folder /></span><span className="ml-1.5">{f}</span></div>
        ))}
      </div>
    </section>
  );
}

function Check() {
  return (
    <svg width="14" height="14" viewBox="0 0 14 14" className="shrink-0">
      <path d="M.5.500h13v13H.5z" fill="#fff" stroke="#b5b5b5" />
      <path d="M3.300 7.200l2.800 3.300 4.700-7.300" fill="none" stroke="#000" strokeWidth="1.900" />
    </svg>
  );
}

function Layers() {
  return (
    <section className="flex min-h-0 flex-1 flex-col">
      <h2 className="h-[30px] pl-[3px] leading-[31px]">图层</h2>
      <div className="flex h-[26px] items-center gap-[9px] pb-[5px] pl-[7px]">
        <Svg size={16}><path d="M0 10l5-2 4 6-3 2z" fill="#6492d4" /><path d="M2 14l6-2 6 8-7-1z" fill="#e45b57" /><path d="M4 8l4-3 6 6-5 3z" fill="#fce94f" /><path d="M7 11l4-4 4 1 8-6 1 2-7 7v5l-4 5c-4-1-5-5-6-10z" fill="#c8843a" stroke="#9a6425" /></Svg>
        <Svg size={16}><path d="M1 8v14h14M5 5v13h14V5z" fill="#eee" stroke="#777" strokeWidth="1.500" /><path d="M12 14V1M9 4l3-3 3 3" fill="none" stroke="#456" strokeWidth="1.600" /><Plus /></Svg>
        <Svg size={17}><path d="M0 11Q11-1 22 11Q11 21 0 11z" fill="#eee" stroke="#999" strokeWidth="1.500" /><circle cx="11" cy="10.500" r="5" fill="#7ba3cc" stroke="#567" /><circle cx="11" cy="10.500" r="2" fill="#222" /><path d="M14 19h10l-5 5z" fill="#555" /></Svg>
        <Svg size={16}><Funnel /></Svg>
      </div>
      <div className="flex-1 border border-l-0 border-[#b9b9b9] bg-white font-bold">
        <div className="flex h-[19px] items-center pl-6"><Svg size={15}><Table gray /></Svg><span className="ml-[6px] whitespace-nowrap">Markov_</span></div>
        <div className="flex h-[19px] items-center pl-[23px]"><Check /><i className="ml-[6px] h-4 w-4 border border-[#7b3033] bg-[#b6494c]" /><span className="ml-[6px]">省份图层</span></div>
        <div className="flex h-[19px] items-center bg-[#0078d7] pl-[23px] font-normal text-white"><Check /><i className="ml-[6px] h-4 w-4 border border-[#6b5580] bg-[#987db7]" /><span className="ml-[3px] h-full flex-1 bg-[#1683db] pl-[3px] leading-[19px] underline underline-offset-1">城市图层</span></div>
      </div>
    </section>
  );
}

/* ---------- status bar ---------- */

const Spinner = () => (
  <span className="ml-auto flex h-full w-[14px] flex-col items-center justify-center gap-[3px] border-l border-[#b9b9b9] bg-[#f3f3f3]">
    <svg width="8" height="5" viewBox="0 0 8 5"><path d="M0 5h8L4 0z" fill="#555" /></svg>
    <svg width="8" height="5" viewBox="0 0 8 5"><path d="M0 0h8L4 5z" fill="#555" /></svg>
  </span>
);

function StatusBar() {
  const box = "flex h-[21px] items-center rounded-sm border border-[#ababab] bg-white shrink-0 overflow-hidden";
  return (
    <footer className="flex h-[28px] items-center pl-[3px] font-['Liberation_Mono','Noto_Sans_CJK_SC',monospace] text-[10px] text-black">
      <div className={box + " w-[200px] pl-2 text-[#8a8a8a]"}>
        <svg width="13" height="13" viewBox="0 0 13 13"><circle cx="5" cy="5" r="4.200" fill="none" stroke="#999" strokeWidth="1.300" /><path d="M8 8l4.500 4.500" stroke="#999" strokeWidth="1.800" /></svg>
        <span className="ml-[7px] whitespace-pre text-xs"><span>搜索</span><span className="text-[10.5px]"> (Ctrl+K)</span></span>
      </div>
      <span className="ml-[171px] w-[25px] whitespace-nowrap text-[11px]">坐标</span>
      <div className={box + " w-[117px] whitespace-pre pl-[5px]"}>2780754, -2751821</div>
      <svg className="ml-1 shrink-0" width="16" height="16" viewBox="0 0 16 16"><g fill="#ddd" stroke="#222" strokeWidth="1.200"><ellipse cx="5" cy="6" rx="3" ry="5" transform="rotate(-35 5 6)" /><ellipse cx="9" cy="10" rx="3" ry="5.500" transform="rotate(-25 9 10)" /><path d="M9 5l6-4M11 7l3-1M1 11l5 1M1 15l5-1M4 5l8 8" /></g></svg>
      <span className="ml-[14px] w-6 whitespace-nowrap text-[11px]">比例</span>
      <div className={box + " w-[83px]"}><span className="-ml-[2px] flex-1">1:34072224</span><span className="flex h-full w-[19px] items-center justify-center border-l border-[#b9b9b9] bg-[#f5f5f5]"><Arrow /></span></div>
      <svg className="ml-[11px] shrink-0" width="13" height="15" viewBox="0 0 13 15"><path d="M3 7V4.500a3.500 3.500 0 0 1 7 0V7" fill="none" stroke="#777" strokeWidth="1.600" /><rect x=".5" y="6.500" width="12" height="8" rx="1" fill="#555" /></svg>
      <span className="ml-[9px] w-9 whitespace-nowrap text-[11px]">放大镜</span>
      <div className={box + " w-[89px] pl-[5px]"}>100%<Spinner /></div>
      <span className="ml-[9px] w-[53px] whitespace-nowrap text-[11px]">旋转角度</span>
      <div className={box + " w-[89px] pl-[5px]"}>0.0°<Spinner /></div>
      <span className="ml-[6px] flex w-[19px]"><Check /></span>
      <span className="w-[37px] whitespace-nowrap text-[11px]">渲染</span>
      <svg className="shrink-0" width="16" height="14" viewBox="0 0 16 14"><g fill="none" stroke="#777"><path d="M0 7q8-13 16 0q-8 13-16 0z" fill="#bbb" /><path d="M8 0v14M0 7h16M2 4h12M2 10h12M5 1q-3 6 0 12M11 1q3 6 0 12" /></g></svg>
      <span className="ml-0.5 w-[83px] text-[#111]">EPSG:4543</span>
      <svg className="shrink-0" width="16" height="15" viewBox="0 0 16 15"><path d="M8 .500C12.500.500 16 3 16 6.500s-3 5.500-6 5.800L13.500 15 7 12.400C3 12.300 0 10 0 6.500S3.500.500 8 .500z" fill="#555" /><g fill="#eee"><circle cx="4.500" cy="6.500" r="1.200" /><circle cx="8" cy="6.500" r="1.200" /><circle cx="11.500" cy="6.500" r="1.200" /></g></svg>
      <svg className="ml-auto shrink-0 self-end" width="12" height="12" viewBox="0 0 12 12"><path d="M9 1h1M9 4h1M6 4h1M9 7h1M6 7h1M3 7h1M9 10h1M6 10h1M3 10h1M0 10h1" stroke="#aaa" /></svg>
    </footer>
  );
}

export default function App() {
  return (
    <div className="relative flex h-[837px] w-[1178px] flex-col overflow-hidden border-b border-l-2 border-r border-t border-[#5d5d5d] bg-[#f0f0f0] font-['Noto_Sans','Noto_Sans_CJK_SC',sans-serif] text-xs text-black">
      <header className="flex h-[30px] shrink-0 items-center bg-white pb-px pl-[7px]">
        <svg width="16" height="16" viewBox="0 0 16 16"><circle cx="7.500" cy="7.500" r="5.700" fill="none" stroke="#589632" strokeWidth="3.200" /><path d="M8 8h3.500l4 4.500V15.500h-3.200L8 11z" fill="#73a93c" stroke="#fff" strokeWidth=".7" /><path d="M6.800 6.800h3.700v3.700z" fill="#f1a43c" stroke="#f1a43c" /></svg>
        <span className="ml-[5px] whitespace-nowrap tracking-[0.12px]">*无标题工程 — QGIS</span>
        <svg className="ml-auto mr-[17px]" width="102" height="11" viewBox="0 0 102 11"><path d="M0 6.500h11M45.500 1.500h9v9h-9zM91 .500l10 10M101 .500l-10 10" fill="none" stroke="#111" /></svg>
      </header>
      <nav className="flex h-[22px] shrink-0 items-center border-b border-[#d5d5d5]">
        <span className="w-[51px] pl-[9px]"><Mnemonic text="工程" k="J" /></span>
        <span className="w-[273px] pl-[9px]"><Mnemonic text="编辑" k="E" /></span>
        {topMenus.map(([t, k, w]) => <span key={k} className={w}><Mnemonic text={t} k={k} /></span>)}
      </nav>
      <div className="shrink-0"><Toolbar1 /><Toolbar2 /></div>
      <main className="flex min-h-0 flex-1">
        <aside className="flex w-[234px] flex-col border-r border-[#b9b9b9]"><Browser /><Layers /></aside>
        <div className="ml-[6px] min-w-0 flex-1 border-b border-l border-[#b9b9b9] bg-white"><MapCanvas /></div>
      </main>
      <StatusBar />
      <ContextMenu />
      <svg className="pointer-events-none absolute left-[48px] top-[529px]" width="220" height="210" viewBox="50 530 220 210">
        <path d="M80.700 550L97.700 593.300L86 584L62.300 732L69 582.300L55.300 589.300Z" fill="#ff1200" />
        <path d="M197.300 535L233.700 565.700L218.300 563.300L254 665.300L203.300 570L194.700 582.700Z" fill="#ff1200" />
      </svg>
    </div>
  );
}
